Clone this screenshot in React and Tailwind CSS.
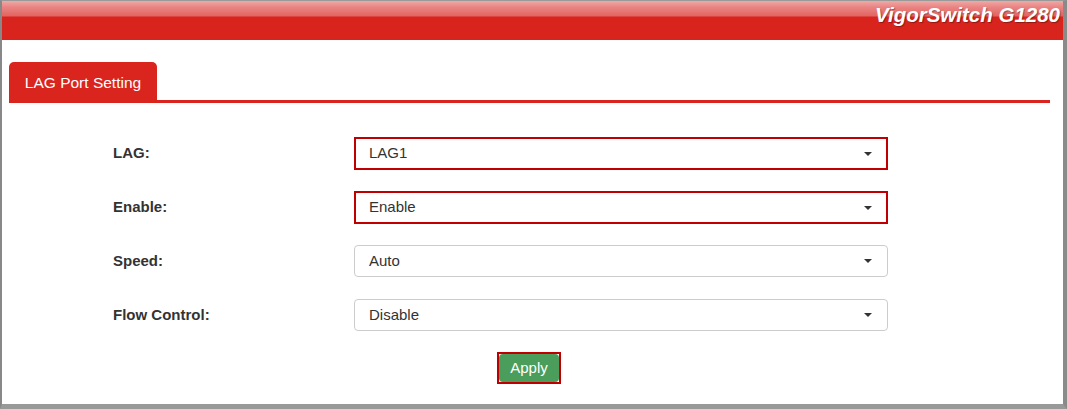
import { useState } from "react";

const fields = [
  { label: "LAG:", value: "LAG1", options: ["LAG1", "LAG2", "LAG3", "LAG4"], focus: true },
  { label: "Enable:", value: "Enable", options: ["Enable", "Disable"], focus: true },
  { label: "Speed:", value: "Auto", options: ["Auto", "10M", "100M", "1000M"] },
  { label: "Flow Control:", value: "Disable", options: ["Enable", "Disable"] },
];

const Caret = () => (
  <svg width="8" height="4" viewBox="0 0 8 4" className="shrink-0">
    <path d="M0 0 L8 0 L4 4 Z" fill="#333" />
  </svg>
);

const SelectBox = ({ field }) => (
  <div
    className={
      field.focus
        ? "flex items-center justify-between w-[534px] h-[33px] border-2 border-[#c00000] pl-[13px] pr-[14px] bg-white"
        : "flex items-center justify-between w-[534px] h-[32px] border border-[#ccc] rounded-[4px] pl-[14px] pr-[15px] bg-white"
    }
  >
    <span className="text-[15px] text-[#333]">{field.value}</span>
    <Caret />
  </div>
);

const App = () => {
  const [values] = useState(fields);

  return (
    <div
      className="w-[1067px] h-[409px] bg-white border-t border-l-2 border-r-4 border-b-[5px] border-t-[#999] border-l-[#888] border-r-[#8a8a8a] border-b-[#999] overflow-hidden"
      style={{ fontFamily: '"Liberation Sans", Arial, sans-serif' }}
    >
      {/* Header */}

      <div className="h-[39px] flex items-center justify-end pr-[3px] bg-[linear-gradient(to_bottom,#f0a9a6_0px,#e98583_6px,#e26462_15px,#d9241d_16px,#d9241d_100%)]">
        <span className="text-[20.5px] font-bold italic text-white leading-none mb-[10px] [text-shadow:1px_1px_1px_rgba(0,0,0,0.35)]">
          VigorSwitch G1280
        </span>
      </div>

      {/* Tab */}

      <div className="mt-[22px] ml-[7px] mr-[13px]">
        <div className="flex">
          <div className="h-[38px] w-[148px] flex items-center justify-center pt-[3px] bg-[#da241e] rounded-t-[5px] text-white text-[15.5px]">
            LAG Port Setting
          </div>
        </div>
        <div className="h-[3px] bg-[#da241e]" />
      </div>

      {/* Form */}

      <div className="mt-[34px] flex flex-col gap-[21px]">
        {values.map((field, i) => (
          <div key={field.label} className={i === 3 ? "flex items-center mt-[1px]" : "flex items-center"}>
            <div className="w-[352px] pl-[111px] text-[15px] font-bold text-[#333]">
              {field.label}
            </div>
            <SelectBox field={field} />
          </div>
        ))}
      </div>

      {/* Apply */}

      <div className="mt-[21px] flex justify-center pr-[7px]">
        <div className="border-2 border-[#c00000]">
          <button className="w-[60px] h-[28px] rounded-[4px] bg-[#4a9d5b] text-white text-[15px] flex items-center justify-center">
            Apply
          </button>
        </div>
      </div>
    </div>
  );
};

export default App;
